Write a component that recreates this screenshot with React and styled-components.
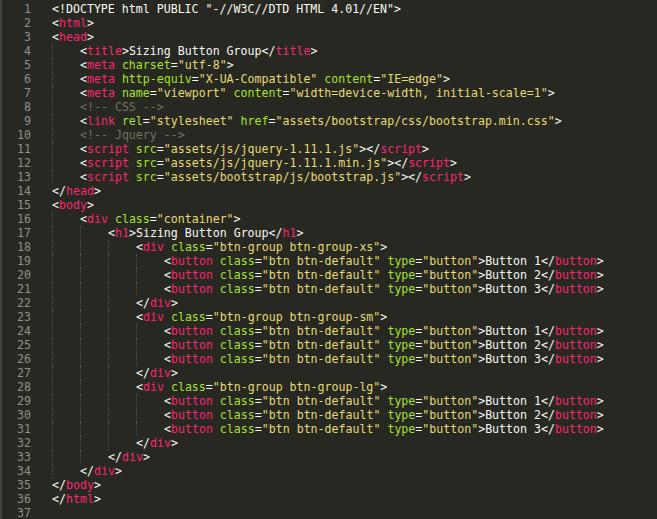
import React from "react";
import styled, { createGlobalStyle } from "styled-components";

const GlobalStyle = createGlobalStyle`
  html, body {
    margin: 0;
    padding: 0;
    background: #272822;
    overflow: hidden;
  }
`;

const colors = {
  tag: "#f92672",
  punct: "#f8f8f2",
  attr: "#a6e22e",
  string: "#e6db74",
  comment: "#75715e",
  text: "#f8f8f2",
};

const Editor = styled.div`
  width: 657px;
  height: 519px;
  box-sizing: border-box;
  border-left: 2px solid #45463f;
  background: #272822;
  padding-top: 2px;
  font-family: "DejaVu Sans Mono", "Liberation Mono", monospace;
  font-size: 11.6px;
  line-height: 14px;
  overflow: hidden;
`;

const Line = styled.div`
  display: flex;
  height: 14px;
  white-space: pre;
`;

const Gutter = styled.div`
  width: 29px;
  padding-right: 21px;
  text-align: right;
  color: #8f908a;
  flex-shrink: 0;
`;

const Code = styled.div`
  display: flex;
`;

const Guide = styled.span`
  display: inline-block;
  width: 28px;
  height: 14px;
  box-sizing: border-box;
  border-left: 1px dotted #4f504a;
`;

const Token = styled.span`
  color: ${(p) => colors[p.$kind]};
`;

const source = `<!DOCTYPE html PUBLIC "-//W3C//DTD HTML 4.01//EN">
<html>
<head>
    <title>Sizing Button Group</title>
    <meta charset="utf-8">
    <meta http-equiv="X-UA-Compatible" content="IE=edge">
    <meta name="viewport" content="width=device-width, initial-scale=1">
    <!-- CSS -->
    <link rel="stylesheet" href="assets/bootstrap/css/bootstrap.min.css">
    <!-- Jquery -->
    <script src="assets/js/jquery-1.11.1.js"></script>
    <script src="assets/js/jquery-1.11.1.min.js"></script>
    <script src="assets/bootstrap/js/bootstrap.js"></script>
</head>
<body>
    <div class="container">
        <h1>Sizing Button Group</h1>
            <div class="btn-group btn-group-xs">
                <button class="btn btn-default" type="button">Button 1</button>
                <button class="btn btn-default" type="button">Button 2</button>
                <button class="btn btn-default" type="button">Button 3</button>
            </div>
            <div class="btn-group btn-group-sm">
                <button class="btn btn-default" type="button">Button 1</button>
                <button class="btn btn-default" type="button">Button 2</button>
                <button class="btn btn-default" type="button">Button 3</button>
            </div>
            <div class="btn-group btn-group-lg">
                <button class="btn btn-default" type="button">Button 1</button>
                <button class="btn btn-default" type="button">Button 2</button>
                <button class="btn btn-default" type="button">Button 3</button>
            </div>
        </div>
    </div>
</body>
</html>
`;

// very small html highlighter, enough for this file
function tokenize(src) {
  if (src.startsWith("<!DOCTYPE")) return [["text", src]];
  if (src.startsWith("<!--")) return [["comment", src]];
  const out = [];
  const re = /(<\/?)([a-z0-9]+)|(\s+)([a-z-]+)(=)("[^"]*")|(>)|([^<>]+)/gi;
  let m;
  while ((m = re.exec(src))) {
    if (m[1]) {
      out.push(["punct", m[1]], ["tag", m[2]]);
    } else if (m[4]) {
      out.push(["text", m[3]], ["attr", m[4]], ["punct", m[5]], ["string", m[6]]);
    } else if (m[7]) {
      out.push(["punct", m[7]]);
    } else {
      out.push(["text", m[8]]);
    }
  }
  return out;
}

const lines = source.split("\n").map((raw) => {
  const lead = raw.match(/^ */)[0].length;
  return { level: lead / 4, tokens: tokenize(raw.slice(lead)) };
});

export default function App() {
  return (
    <>
      <GlobalStyle />
      <Editor>
        {lines.map((line, i) => (
          <Line key={i}>
            <Gutter>{i + 1}</Gutter>
            <Code>
              {Array.from({ length: line.level }).map((_, j) => (
                <Guide key={j} />
              ))}
              {line.tokens.map(([kind, text], j) => (
                <Token key={j} $kind={kind}>
                  {text}
                </Token>
              ))}
            </Code>
          </Line>
        ))}
      </Editor>
    </>
  );
}
